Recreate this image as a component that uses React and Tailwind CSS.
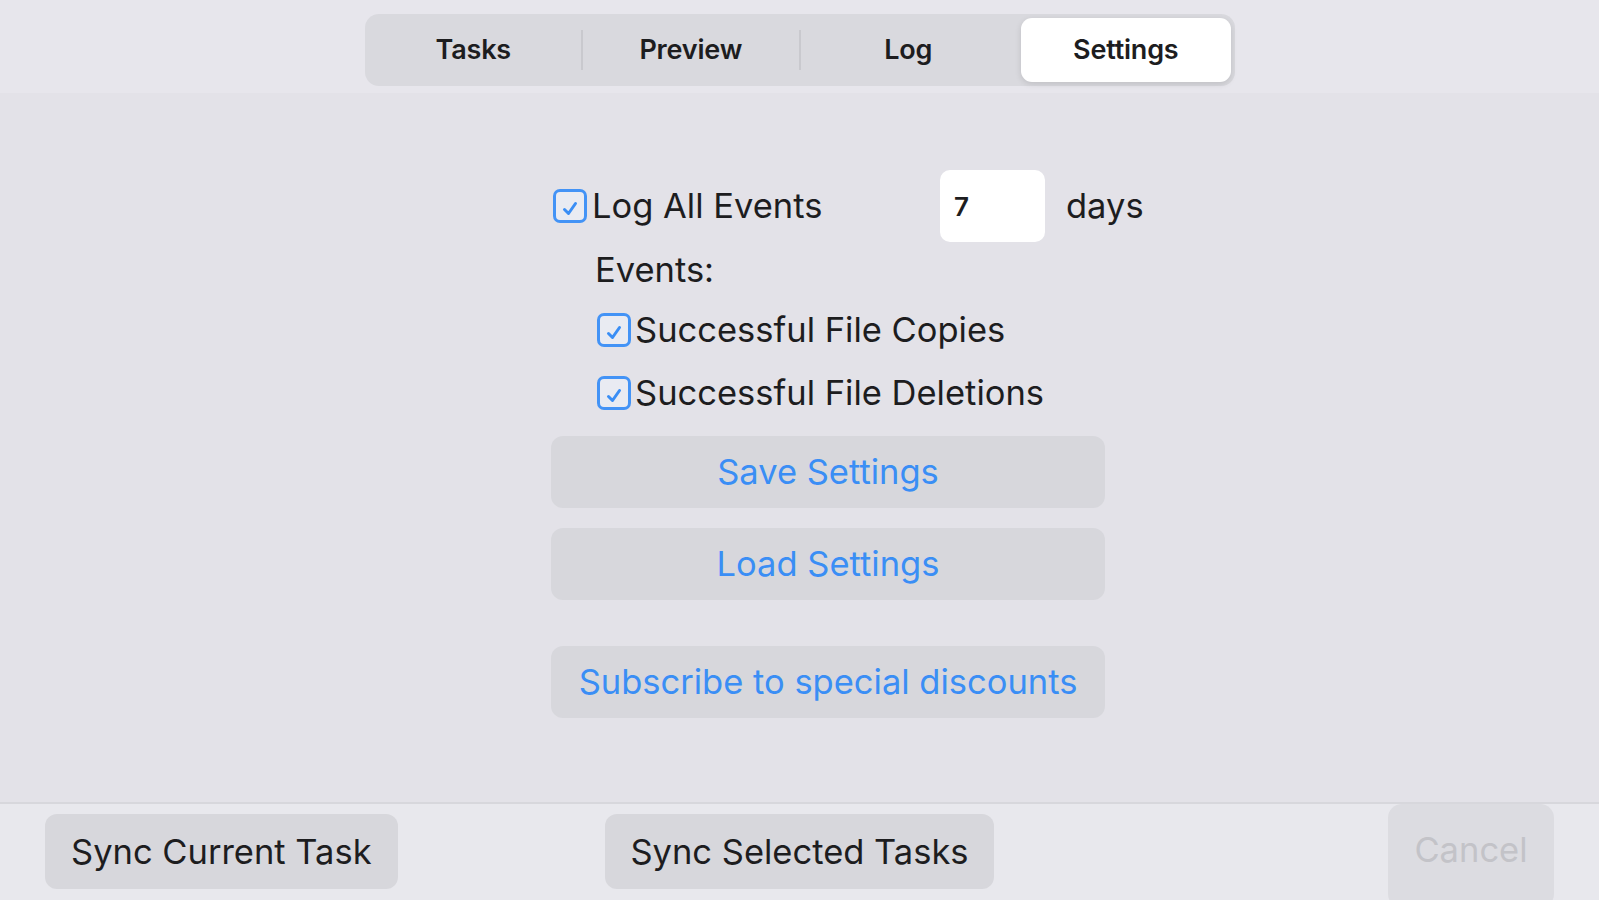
import React, { useState } from 'react';

const Check = ({ checked, onClick }) => (
  <button
    onClick={onClick}
    className="w-[34px] h-[34px] shrink-0 rounded-[7px] border-[3px] border-[#4393f6] bg-[#e9ebf2] flex items-center justify-center"
  >
    {checked && (
      <svg viewBox="0 0 28 28" className="w-[28px] h-[28px]">
        <path d="M8.5 17.5 L12.5 21.5 L19.5 11.5" fill="none" stroke="#3a8ef5" strokeWidth="3" strokeLinecap="round" strokeLinejoin="round" />
      </svg>
    )}
  </button>
);

const tabs = ['Tasks', 'Preview', 'Log', 'Settings'];

const App = () => {
  const [tab, setTab] = useState('Settings');
  const [logAll, setLogAll] = useState(true);
  const [copies, setCopies] = useState(true);
  const [deletions, setDeletions] = useState(true);
  const [days, setDays] = useState('7');

  return (
    <div className="w-full h-[900px] flex flex-col bg-[#e3e2e8] text-[#1d1d1f] overflow-hidden" style={{ fontFamily: 'Inter, "Liberation Sans", sans-serif' }}>
      {/* top tab bar */}
      <div className="h-[93px] bg-[#e7e6ec] flex justify-center pt-[14px]">
        <div className="w-[870px] h-[72px] rounded-[14px] bg-[#d9d9de] p-[4px] flex items-center">
          {tabs.map((t, i) => {
            const active = t === tab;
            const nextActive = tabs[i + 1] === tab;
            return (
              <React.Fragment key={t}>
                <button
                  onClick={() => setTab(t)}
                  className={`flex-1 h-full rounded-[11px] text-[27px] font-semibold tracking-[-0.2px] ${active ? 'bg-white shadow-[0_2px_6px_rgba(0,0,0,0.12)]' : ''}`}
                >
                  {t}
                </button>
                {i < tabs.length - 1 && (
                  <div className={`w-[2px] h-[40px] mx-[3px] ${active || nextActive ? 'bg-transparent' : 'bg-[#c9c9ce]'}`} />
                )}
              </React.Fragment>
            );
          })}
        </div>
      </div>

      {/* settings body */}
      <div className="flex-1 pl-[553px] pt-[77px]">
        <div className="flex items-center h-[72px]">
          <Check checked={logAll} onClick={() => setLogAll(!logAll)} />
          <span className="ml-[5px] text-[34.5px] w-[348px]">Log All Events</span>
          <input
            value={days}
            onChange={(e) => setDays(e.target.value)}
            className="w-[105px] h-[72px] rounded-[10px] bg-white px-[14px] text-[26px] font-semibold outline-none"
          />
          <span className="ml-[21px] text-[34.5px]">days</span>
        </div>
        <div className="pl-[42px] h-[56px] flex items-center text-[34.5px]">Events:</div>
        <div className="pl-[44px] flex flex-col">
          <div className="flex items-center h-[62px] mt-[1px]">
            <Check checked={copies} onClick={() => setCopies(!copies)} />
            <span className="ml-[4px] text-[34.5px]">Successful File Copies</span>
          </div>
          <div className="flex items-center h-[62px] mt-[1px]">
            <Check checked={deletions} onClick={() => setDeletions(!deletions)} />
            <span className="ml-[4px] text-[34.5px]">Successful File Deletions</span>
          </div>
        </div>
        <div className="-ml-[2px] w-[554px] flex flex-col mt-[12px]">
          <button className="h-[72px] rounded-[12px] bg-[#d7d7dc] text-[34.5px] text-[#3a8ef5]">Save Settings</button>
          <button className="h-[72px] mt-[20px] rounded-[12px] bg-[#d7d7dc] text-[34.5px] text-[#3a8ef5]">Load Settings</button>
          <button className="h-[72px] mt-[46px] rounded-[12px] bg-[#d7d7dc] text-[34.5px] text-[#3a8ef5]">Subscribe to special discounts</button>
        </div>
      </div>

      {/* bottom toolbar */}
      <div className="h-[98px] border-t-2 border-[#d7d7dc] bg-[#e8e8ed] grid grid-cols-3 items-start px-[45px]">
        <button className="justify-self-start mt-[10px] h-[75px] px-[26px] rounded-[12px] bg-[#d7d7dc] text-[34.5px]">Sync Current Task</button>
        <button className="justify-self-center mt-[10px] h-[75px] px-[25px] rounded-[12px] bg-[#d7d7dc] text-[34.5px]">Sync Selected Tasks</button>
        <button disabled className="justify-self-end h-[104px] w-[166px] pb-[12px] rounded-[14px] bg-[#dcdce1] text-[34.5px] text-[#c3c3c8]">Cancel</button>
      </div>
    </div>
  );
};

export default App;
